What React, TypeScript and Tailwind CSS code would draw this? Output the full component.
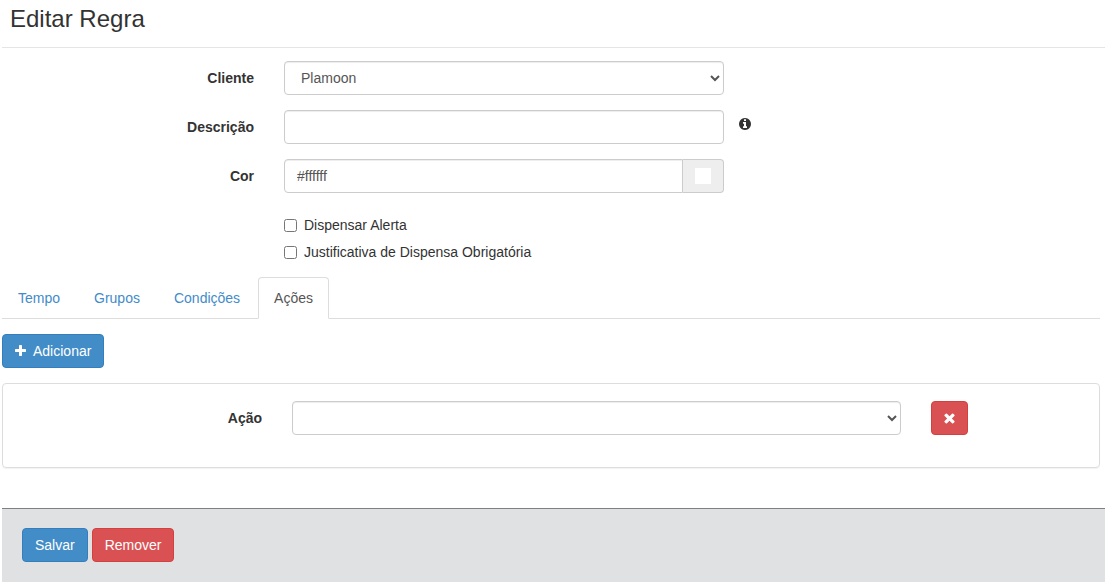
import { useState } from "react";
import type { ReactNode } from "react";

const CONTROL_CLASSNAME =
  "h-[34px] w-full rounded border border-[#ccc] bg-white px-3 text-sm text-[#555] shadow-[inset_0_1px_1px_rgba(0,0,0,0.075)] outline-none focus:border-[#66afe9]";

const TABS = ["Tempo", "Grupos", "Condições", "Ações"];

function PlusIcon() {
  return (
    <svg width="11" height="12" viewBox="192 128 1408 1536" fill="currentColor" aria-hidden="true">
      <path d="M1600 736v192q0 40-28 68t-68 28h-416v416q0 40-28 68t-68 28h-192q-40 0-68-28t-28-68v-416h-416q-40 0-68-28t-28-68v-192q0-40 28-68t68-28h416v-416q0-40 28-68t68-28h192q40 0 68 28t28 68v416h416q40 0 68 28t28 68z" />
    </svg>
  );
}

function TimesIcon() {
  return (
    <svg width="11" height="11" viewBox="256 320 1280 1280" fill="currentColor" aria-hidden="true">
      <path d="M1490 1322q0 40-28 68l-136 136q-28 28-68 28t-68-28l-294-294-294 294q-28 28-68 28t-68-28l-136-136q-28-28-28-68t28-68l294-294-294-294q-28-28-28-68t28-68l136-136q28-28 68-28t68 28l294 294 294-294q28-28 68-28t68 28l136 136q28 28 28 68t-28 68l-294 294 294 294q28 28 28 68z" />
    </svg>
  );
}

function InfoIcon() {
  return (
    <svg width="12" height="12" viewBox="128 128 1536 1536" fill="currentColor" aria-hidden="true">
      <path d="M1152 1376v-160q0-14-9-23t-23-9h-96v-512q0-14-9-23t-23-9h-320q-14 0-23 9t-9 23v160q0 14 9 23t23 9h96v320h-96q-14 0-23 9t-9 23v160q0 14 9 23t23 9h448q14 0 23-9t9-23zm-128-896v-160q0-14-9-23t-23-9h-192q-14 0-23 9t-9 23v160q0 14 9 23t23 9h192q14 0 23-9t9-23zm640 416q0 209-103 385.5t-279.5 279.5-385.5 103-385.5-103-279.5-279.5-103-385.5 103-385.5 279.5-279.5 385.5-103 385.5 103 279.5 279.5 103 385.5z" />
    </svg>
  );
}

interface FieldProps {
  id: string;
  label: string;
  children: ReactNode;
  extra?: ReactNode;
}

function Field({ id, label, children, extra }: FieldProps) {
  return (
    <div className="-mx-[15px] mb-[15px] grid grid-cols-12">
      <label htmlFor={id} className="col-span-3 px-[15px] pt-[7px] text-right font-bold">
        {label}
      </label>
      <div className="col-span-5 px-[15px]">{children}</div>
      {extra}
    </div>
  );
}

interface ButtonProps {
  variant: "primary" | "danger";
  label?: string;
  children: ReactNode;
}

function Button({ variant, label, children }: ButtonProps) {
  const color =
    variant === "primary"
      ? "border-[#357ebd] bg-[#428dc7] hover:bg-[#3276b1]"
      : "border-[#d43f3f] bg-[#d95153] hover:bg-[#d2322d]";

  return (
    <button
      type="button"
      aria-label={label}
      className={`inline-flex h-[34px] cursor-pointer items-center gap-[7px] rounded border px-3 text-white ${color}`}
    >
      {children}
    </button>
  );
}

export default function App() {
  const [color, setColor] = useState("#ffffff");
  const [description, setDescription] = useState("");
  const [activeTab, setActiveTab] = useState("Ações");

  return (
    <div className="bg-white pl-0.5 font-['Liberation_Sans',Arial,sans-serif] text-sm/5 text-[#333]">
      <h1 className="border-b border-[#e5e5e5] px-2 pt-1 pb-[13px] text-2xl/[30px]">
        Editar Regra
      </h1>

      <form className="pt-[13px]" onSubmit={(event) => event.preventDefault()}>
        <div className="mr-[5px]">
          <Field id="cliente" label="Cliente">
            <select id="cliente" className={CONTROL_CLASSNAME}>
              <option>Plamoon</option>
            </select>
          </Field>

          <Field
            id="descricao"
            label="Descrição"
            extra={
              <span className="col-span-4 pt-2">
                <InfoIcon />
              </span>
            }
          >
            <input
              id="descricao"
              type="text"
              value={description}
              onChange={(event) => setDescription(event.target.value)}
              className={CONTROL_CLASSNAME}
            />
          </Field>

          <Field id="cor" label="Cor">
            <div className="flex">
              <input
                id="cor"
                type="text"
                value={color}
                onChange={(event) => setColor(event.target.value)}
                className={`${CONTROL_CLASSNAME} min-w-0 flex-1 rounded-r-none`}
              />
              <span className="flex items-center rounded-r border border-l-0 border-[#ccc] bg-[#eee] px-3">
                <i className="block size-4" style={{ backgroundColor: color }} />
              </span>
            </div>
          </Field>

          <div className="-mx-[15px] mb-[15px] grid grid-cols-12">
            <div className="col-span-5 col-start-4 px-[15px]">
              <label className="flex items-center gap-[7px] pt-[7px]">
                <input type="checkbox" className="size-[13px]" />
                Dispensar Alerta
              </label>
              <label className="flex items-center gap-[7px] pt-[7px]">
                <input type="checkbox" className="size-[13px]" />
                Justificativa de Dispensa Obrigatória
              </label>
            </div>
          </div>

          <ul className="flex gap-0.5 border-b border-[#ddd]">
            {TABS.map((tab) => (
              <li key={tab} className="-mb-px">
                <a
                  href="#"
                  onClick={(event) => {
                    event.preventDefault();
                    setActiveTab(tab);
                  }}
                  className={`block rounded-t border px-[15px] py-2.5 ${
                    tab === activeTab
                      ? "border-[#ddd] border-b-white bg-white text-[#555]"
                      : "border-transparent text-[#428bca]"
                  }`}
                >
                  {tab}
                </a>
              </li>
            ))}
          </ul>

          <div className="py-[15px]">
            <Button variant="primary">
              <PlusIcon />
              Adicionar
            </Button>
          </div>

          <div className="grid grid-cols-12 rounded border border-[#ddd] pt-[17px] pb-8 shadow-[0_1px_1px_rgba(0,0,0,0.05)]">
            <label htmlFor="acao" className="col-span-3 px-[15px] pt-[7px] text-right font-bold">
              Ação
            </label>
            <div className="col-span-7 px-[15px]">
              <select id="acao" className={CONTROL_CLASSNAME}>
                <option></option>
              </select>
            </div>
            <div className="col-span-2 px-[15px]">
              <Button variant="danger" label="Remover ação">
                <TimesIcon />
              </Button>
            </div>
          </div>
        </div>

        <div className="mt-10 flex gap-1 border-t border-[#808080] bg-[#e0e1e3] px-5 pt-[19px] pb-5">
          <Button variant="primary">Salvar</Button>
          <Button variant="danger">Remover</Button>
        </div>
      </form>
    </div>
  );
}
